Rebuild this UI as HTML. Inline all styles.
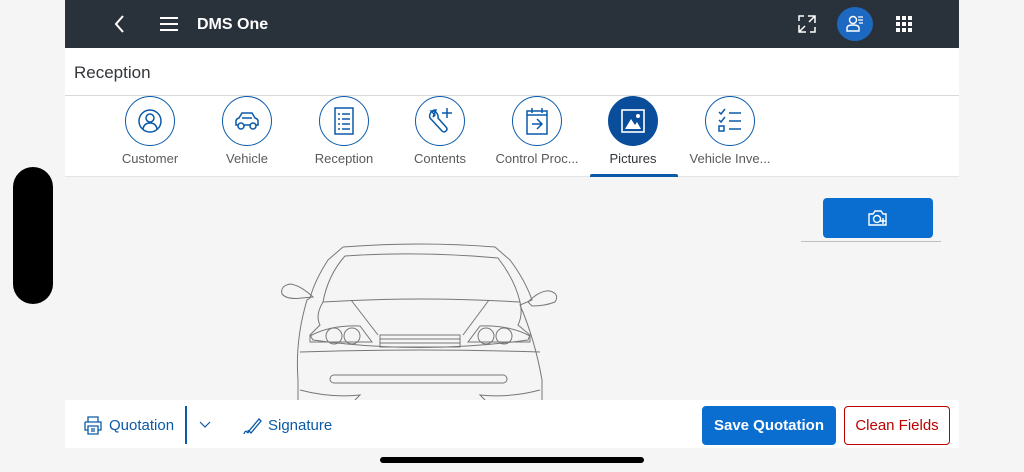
<!DOCTYPE html>
<html><head><style>
*{margin:0;padding:0;box-sizing:border-box}
body{width:1024px;height:472px;background:#f5f5f5;font-family:"Liberation Sans",sans-serif;position:relative;overflow:hidden}
.abs{position:absolute}
.hdr{left:65px;top:0;width:894px;height:48px;background:#29313a}
.ttl{left:65px;top:48px;width:894px;height:48px;background:#fff;border-bottom:1px solid #d9d9d9}
.tabs{left:65px;top:96px;width:894px;height:81px;background:#fff;border-bottom:1px solid #e5e5e5}
.tab{position:absolute;top:0;width:90px;text-align:center}
.circ{width:50px;height:50px;border:1.5px solid #0a5aa8;border-radius:50%;margin:0 auto;display:flex;align-items:center;justify-content:center;background:#fff}
.lbl{font-size:13px;color:#5a5a5a;margin-top:5px;white-space:nowrap}
.ftr{left:65px;top:400px;width:894px;height:48px;background:#fff}
</style></head><body>
<div class="abs" style="left:13px;top:167px;width:40px;height:137px;background:#000;border-radius:20px"></div>
<div class="abs hdr">
<svg class="abs" style="left:48px;top:14px" width="14" height="20"><path d="M10 2 L3 10 L10 18" stroke="#fff" stroke-width="2" fill="none"/></svg>
<svg class="abs" style="left:94px;top:16px" width="20" height="16"><path d="M1 2H19M1 8H19M1 14H19" stroke="#fff" stroke-width="2"/></svg>
<div class="abs" style="left:132px;top:16px;color:#fff;font-weight:bold;font-size:16px">DMS One</div>
<svg class="abs" style="left:732px;top:14px" width="20" height="20"><path d="M11 2H18V9M18 2L12 8M9 18H2V11M2 18L8 12M2 7V2H7M13 18H18V13" stroke="#fff" stroke-width="1.5" fill="none"/></svg>
<div class="abs" style="left:772px;top:7px;width:36px;height:34px;border-radius:50%;background:#1d69c1"></div>
<svg class="abs" style="left:780px;top:14px" width="20" height="20"><circle cx="8" cy="6" r="3.5" stroke="#fff" stroke-width="1.4" fill="none"/><path d="M2 17V14Q2 11 8 11Q14 11 14 14V17Z" stroke="#fff" stroke-width="1.4" fill="none"/><path d="M13 3H18M13 6H18M14 9H18" stroke="#fff" stroke-width="1.2"/></svg>
<svg class="abs" style="left:831px;top:16px" width="17" height="17" fill="#fff"><rect x="0" y="0" width="4" height="4"/><rect x="6" y="0" width="4" height="4"/><rect x="12" y="0" width="4" height="4"/><rect x="0" y="6" width="4" height="4"/><rect x="6" y="6" width="4" height="4"/><rect x="12" y="6" width="4" height="4"/><rect x="0" y="12" width="4" height="4"/><rect x="6" y="12" width="4" height="4"/><rect x="12" y="12" width="4" height="4"/></svg>
</div>
<div class="abs ttl"><div class="abs" style="left:9px;top:15px;font-size:17px;color:#32363a">Reception</div></div>
<div class="abs tabs">
<div class="tab" style="left:40px"><div class="circ"><svg width="26" height="26"><circle cx="13" cy="13" r="11" stroke="#0a5aa8" stroke-width="1.5" fill="none"/><circle cx="13" cy="10" r="4" stroke="#0a5aa8" stroke-width="1.5" fill="none"/><path d="M6 21Q7 15 13 15Q19 15 20 21" stroke="#0a5aa8" stroke-width="1.5" fill="none"/></svg></div><div class="lbl">Customer</div></div>
<div class="tab" style="left:137px"><div class="circ"><svg width="28" height="22"><path d="M3 15V11Q3 9 6 8L9 3H19L22 8Q25 9 25 11V15Z M9 8H19" stroke="#0a5aa8" stroke-width="1.5" fill="none"/><circle cx="8" cy="16" r="3" fill="#fff" stroke="#0a5aa8" stroke-width="1.5"/><circle cx="20" cy="16" r="3" fill="#fff" stroke="#0a5aa8" stroke-width="1.5"/></svg></div><div class="lbl">Vehicle</div></div>
<div class="tab" style="left:234px"><div class="circ"><svg width="20" height="28"><rect x="1" y="1" width="18" height="26" stroke="#0a5aa8" stroke-width="1.5" fill="none"/><path d="M4 7H6M8 7H16M4 12H6M8 12H16M4 17H6M8 17H16M4 22H6M8 22H16" stroke="#0a5aa8" stroke-width="1.5"/></svg></div><div class="lbl">Reception</div></div>
<div class="tab" style="left:330px"><div class="circ"><svg width="28" height="28"><path d="M10 3A6 6 0 0 0 4 11L16 24Q18 26 20 24Q22 22 20 20L12 11A6 6 0 0 0 5 4L9 8L7 10Z" stroke="#0a5aa8" stroke-width="1.5" fill="none"/><path d="M21 1V11M16 6H26" stroke="#0a5aa8" stroke-width="1.5"/></svg></div><div class="lbl">Contents</div></div>
<div class="tab" style="left:427px"><div class="circ"><svg width="24" height="28"><rect x="2" y="4" width="20" height="23" stroke="#0a5aa8" stroke-width="1.5" fill="none"/><path d="M2 8H22M7 1V6M17 1V6M7 17H16M12 12L17 17L12 22" stroke="#0a5aa8" stroke-width="1.5" fill="none"/></svg></div><div class="lbl">Control Proc...</div></div>
<div class="tab" style="left:523px"><div class="circ" style="background:#0a4e9b;border-color:#0a4e9b"><svg width="24" height="24"><rect x="1" y="1" width="22" height="22" stroke="#fff" stroke-width="1.6" fill="none"/><path d="M4 20L10 10L14 16L16 13L20 20Z" fill="#fff"/><circle cx="17" cy="7" r="2" fill="#fff"/></svg></div><div class="lbl" style="color:#32363a">Pictures</div></div>
<div class="abs" style="left:525px;top:78px;width:88px;height:3px;background:#0a5aa8;border-radius:2px 2px 0 0"></div>
<div class="tab" style="left:620px"><div class="circ"><svg width="26" height="26"><path d="M2 4L4 6L8 1M2 12L4 14L8 9M12 5H24M12 13H24M12 21H24" stroke="#0a5aa8" stroke-width="1.5" fill="none"/><rect x="2" y="18" width="5" height="5" stroke="#0a5aa8" stroke-width="1.5" fill="none"/></svg></div><div class="lbl">Vehicle Inve...</div></div>
</div>
<div class="abs" style="left:823px;top:198px;width:110px;height:40px;background:#0a6ed1;border-radius:4px"></div>
<svg class="abs" style="left:867px;top:209px" width="22" height="18"><path d="M2 5H6L8 2H14L16 5H19V16H2Z" stroke="#fff" stroke-width="1.4" fill="none"/><circle cx="10" cy="10" r="3.5" stroke="#fff" stroke-width="1.4" fill="none"/><path d="M16 9V15M13 12H19" stroke="#fff" stroke-width="1.4"/></svg>
<div class="abs" style="left:801px;top:241px;width:140px;height:1px;background:#bfbfbf"></div>
<svg class="abs" style="left:270px;top:230px" width="300" height="170" fill="none" stroke="#777" stroke-width="1">
<path d="M73 17Q150 11 225 17L240 30Q255 50 262 70L250 75Q265 110 272 150L272 170"/>
<path d="M73 17L58 30Q45 50 40 68L37 70Q25 110 28 150L28 170"/>
<path d="M75 26Q150 21 228 28Q245 50 250 72Q150 66 53 72Q58 45 75 26Z"/>
<path d="M43 67Q30 55 20 54Q10 56 12 64Q17 70 32 68Z"/>
<path d="M258 72Q270 60 280 61Q290 64 285 72Q275 76 262 76Z"/>
<path d="M53 72Q45 85 50 95L40 105L43 110Q150 125 258 110L260 105L248 95Q253 85 250 72"/>
<path d="M81 70L108 105M219 70L193 105"/>
<path d="M40 106Q60 95 90 96L102 112L40 112Z M260 106Q240 95 210 96L198 112L260 112Z"/>
<circle cx="64" cy="106" r="8"/><circle cx="82" cy="106" r="8"/><circle cx="216" cy="106" r="8"/><circle cx="234" cy="106" r="8"/>
<rect x="110" y="105" width="80" height="12"/><path d="M110 109H190M110 113H190"/>
<path d="M30 122Q150 118 270 122"/>
<rect x="60" y="145" width="177" height="8" rx="4"/>
<path d="M30 160Q60 168 90 165L85 170M270 160Q240 168 210 165L215 170"/>
</svg>
<div class="abs ftr">
<svg class="abs" style="left:19px;top:16px" width="18" height="19"><path d="M4 6V1H14V6M1 6H17V14H14M4 14H1V6M4 10H14V18H4Z M7 13H11M7 15H11" stroke="#0a5aa8" stroke-width="1.3" fill="none"/></svg>
<div class="abs" style="left:44px;top:17px;font-size:15px;color:#0a5aa8">Quotation</div>
<div class="abs" style="left:120px;top:6px;width:1.5px;height:38px;background:#0a5aa8"></div>
<svg class="abs" style="left:134px;top:21px" width="12" height="8"><path d="M1 1L6 6L11 1" stroke="#0a5aa8" stroke-width="1.2" fill="none"/></svg>
<svg class="abs" style="left:178px;top:18px" width="20" height="17"><path d="M1 16Q2 12 4 14Q6 16 5 12M8 15L18 3L16 1L6 13Z" stroke="#0a5aa8" stroke-width="1.3" fill="none"/></svg>
<div class="abs" style="left:203px;top:17px;font-size:15px;color:#0a5aa8">Signature</div>
<div class="abs" style="left:637px;top:6px;width:134px;height:39px;background:#0a6ed1;border-radius:4px;color:#fff;font-weight:bold;font-size:15px;text-align:center;line-height:39px">Save Quotation</div>
<div class="abs" style="left:779px;top:6px;width:106px;height:39px;border:1.5px solid #bb0000;border-radius:4px;color:#bb0000;font-size:15px;text-align:center;line-height:37px">Clean Fields</div>
</div>
<div class="abs" style="left:380px;top:457px;width:264px;height:6px;background:#000;border-radius:3px"></div>
</body></html>
